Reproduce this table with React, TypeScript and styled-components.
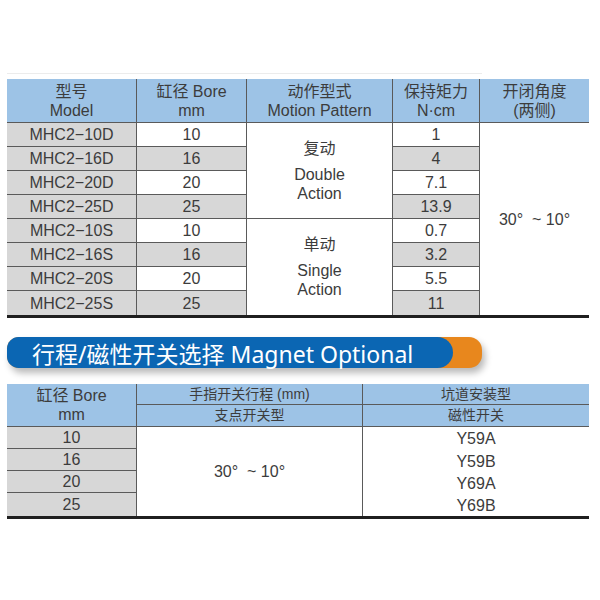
import React from "react";
import styled, { createGlobalStyle } from "styled-components";

const Global = createGlobalStyle`
  html, body { margin: 0; padding: 0; background: #ffffff; }
  body { font-family: "Liberation Sans", "Noto Sans CJK SC", sans-serif; color: #3a3a3a; }
`;

const Page = styled.div`
  width: 600px;
  height: 600px;
  box-sizing: border-box;
  padding: 73px 0 0 7px;
  display: flex;
  flex-direction: column;
  align-items: flex-start;
`;

const TopRule = styled.div`
  width: 475px;
  height: 1px;
  background: #ececec;
  margin-bottom: 5px;
`;

type Tone = "blue" | "gray" | "white";
const toneColor: Record<Tone, string> = {
  blue: "#9dc3e6",
  gray: "#d7d7d7",
  white: "#ffffff",
};

const Grid = styled.div<{ $cols: string; $rows: string }>`
  display: grid;
  width: 582px;
  grid-template-columns: ${(p) => p.$cols};
  grid-template-rows: ${(p) => p.$rows};
  border-bottom: 3px solid #1f1f1f;
`;

const Cell = styled.div<{ $tone?: Tone; $r?: boolean; $b?: boolean; $size?: number; $lh?: number }>`
  box-sizing: border-box;
  display: flex;
  flex-direction: column;
  align-items: center;
  justify-content: center;
  text-align: center;
  white-space: pre;
  background: ${(p) => toneColor[p.$tone ?? "white"]};
  border-right: ${(p) => (p.$r ? "1px solid #5a5a5a" : "none")};
  border-bottom: ${(p) => (p.$b ? "1px solid #5a5a5a" : "none")};
  font-size: ${(p) => p.$size ?? 16}px;
  line-height: ${(p) => p.$lh ?? 19}px;
  color: #3c3c3c;
`;

const Line = styled.span<{ $gap?: number }>`
  display: block;
  margin-bottom: ${(p) => p.$gap ?? 0}px;
`;

const BannerWrap = styled.div`
  margin-top: 19px;
  width: 475px;
  height: 31px;
  background: #e8871d;
  border-radius: 12px 13px 13px 12px;
  box-shadow: 3px 5px 7px rgba(0, 0, 0, 0.28);
  display: flex;
`;

const BannerBlue = styled.div`
  width: 446px;
  height: 31px;
  box-sizing: border-box;
  background: #0b66b3;
  border-radius: 12px 16px 16px 12px;
  display: flex;
  align-items: center;
  padding-left: 25px;
  color: #ffffff;
  font-family: "Noto Sans", "Noto Sans CJK SC", sans-serif;
  font-size: 23px;
  white-space: pre;
  letter-spacing: 0;
`;

const Spacer = styled.div`
  height: 16px;
`;

const models1 = [
  ["MHC2\u221210D", "10", "1"],
  ["MHC2\u221216D", "16", "4"],
  ["MHC2\u221220D", "20", "7.1"],
  ["MHC2\u221225D", "25", "13.9"],
  ["MHC2\u221210S", "10", "0.7"],
  ["MHC2\u221216S", "16", "3.2"],
  ["MHC2\u221220S", "20", "5.5"],
  ["MHC2\u221225S", "25", "11"],
];

function TableOne() {
  const cells: React.ReactNode[] = [];
  models1.forEach(([model, bore, force], i) => {
    const last = i === models1.length - 1;
    const tone: Tone = i % 2 === 0 ? "white" : "gray";
    cells.push(
      <Cell key={`m${i}`} $tone="gray" $r $b={!last} style={{ gridColumn: 1, gridRow: i + 2 }}>
        {model}
      </Cell>
    );
    cells.push(
      <Cell key={`b${i}`} $tone={tone} $r $b={!last} style={{ gridColumn: 2, gridRow: i + 2 }}>
        {bore}
      </Cell>
    );
    cells.push(
      <Cell key={`f${i}`} $tone={tone} $r $b={!last} style={{ gridColumn: 4, gridRow: i + 2 }}>
        {force}
      </Cell>
    );
  });
  return (
    <Grid $cols="130px 110px 146px 87px 109px" $rows="44px repeat(8, 24px)">
      <Cell $tone="blue" $r $b>
        <Line>型号</Line>
        <Line>Model</Line>
      </Cell>
      <Cell $tone="blue" $r $b>
        <Line>缸径 Bore</Line>
        <Line>mm</Line>
      </Cell>
      <Cell $tone="blue" $r $b>
        <Line>动作型式</Line>
        <Line>Motion Pattern</Line>
      </Cell>
      <Cell $tone="blue" $r $b>
        <Line>保持矩力</Line>
        <Line>N·cm</Line>
      </Cell>
      <Cell $tone="blue" $b>
        <Line>开闭角度</Line>
        <Line>(两侧)</Line>
      </Cell>
      {cells}
      <Cell $r $b style={{ gridColumn: 3, gridRow: "2 / span 4" }}>
        <Line $gap={7}>复动</Line>
        <Line>Double</Line>
        <Line>Action</Line>
      </Cell>
      <Cell $r style={{ gridColumn: 3, gridRow: "6 / span 4" }}>
        <Line $gap={7}>单动</Line>
        <Line>Single</Line>
        <Line>Action</Line>
      </Cell>
      <Cell style={{ gridColumn: 5, gridRow: "2 / span 8" }}>{"30°  ~ 10°"}</Cell>
    </Grid>
  );
}

const bores2 = ["10", "16", "20", "25"];
const switches = ["Y59A", "Y59B", "Y69A", "Y69B"];

function TableTwo() {
  return (
    <Grid $cols="130px 226px 226px" $rows="21px 22px 22px 22px 22px 23px">
      <Cell $tone="blue" $r $b style={{ gridColumn: 1, gridRow: "1 / span 2" }}>
        <Line>缸径 Bore</Line>
        <Line>mm</Line>
      </Cell>
      <Cell $tone="blue" $r $b $size={14} style={{ gridColumn: 2, gridRow: 1 }}>
        手指开关行程 (mm)
      </Cell>
      <Cell $tone="blue" $b $size={14} style={{ gridColumn: 3, gridRow: 1 }}>
        坑道安装型
      </Cell>
      <Cell $tone="blue" $r $b $size={14} style={{ gridColumn: 2, gridRow: 2 }}>
        支点开关型
      </Cell>
      <Cell $tone="blue" $b $size={14} style={{ gridColumn: 3, gridRow: 2 }}>
        磁性开关
      </Cell>
      {bores2.map((b, i) => (
        <Cell key={b} $tone="gray" $r $b={i < bores2.length - 1} style={{ gridColumn: 1, gridRow: i + 3 }}>
          {b}
        </Cell>
      ))}
      <Cell $r style={{ gridColumn: 2, gridRow: "3 / span 4" }}>{"30°  ~ 10°"}</Cell>
      <Cell $lh={22.3} style={{ gridColumn: 3, gridRow: "3 / span 4", paddingTop: 3 }}>
        {switches.map((s) => (
          <Line key={s}>{s}</Line>
        ))}
      </Cell>
    </Grid>
  );
}

export default function App() {
  return (
    <>
      <Global />
      <Page>
        <TopRule />
        <TableOne />
        <BannerWrap>
          <BannerBlue>{"行程/磁性开关选择 Magnet Optional"}</BannerBlue>
        </BannerWrap>
        <Spacer />
        <TableTwo />
      </Page>
    </>
  );
}
